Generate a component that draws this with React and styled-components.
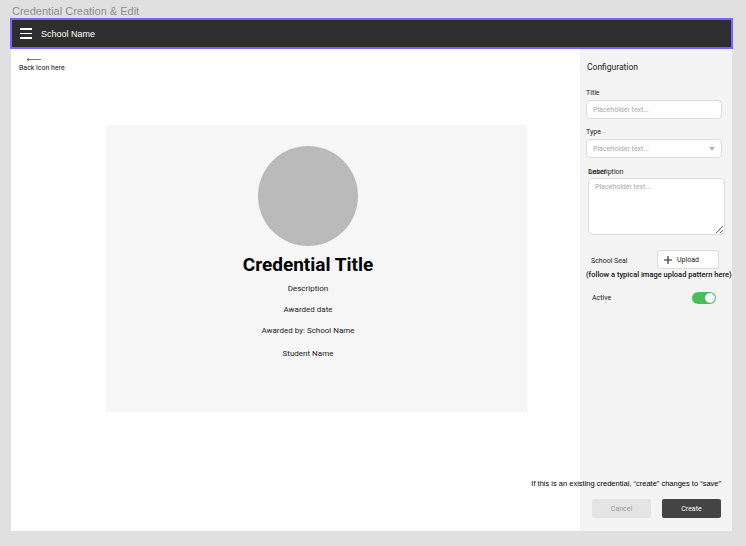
import styled, { createGlobalStyle } from "styled-components";

const Global = createGlobalStyle`
  html, body { margin: 0; padding: 0; background: #e0e0e0; }
  body { font-family: Roboto, "Liberation Sans", Arial, sans-serif; }
  * { box-sizing: border-box; }
`;

const Page = styled.div`
  width: 746px;
  height: 546px;
  padding-left: 11px;
`;

const Caption = styled.div`
  height: 18px;
  line-height: 23px;
  padding-left: 1px;
  font-family: "Liberation Sans", Arial, sans-serif;
  font-size: 11px;
  color: #8e8e8e;
`;

const Frame = styled.div`
  width: 721px;
  height: 513px;
  background: #fff;
  display: flex;
  flex-direction: column;
`;

const Header = styled.header`
  height: 31px;
  margin: 0 -1px;
  border: 2px solid #7b61ff;
  background: #2e2e2e;
  display: flex;
  align-items: center;
  padding-left: 8px;
  gap: 9px;
`;

const Burger = styled.div`
  width: 12px;
  display: flex;
  flex-direction: column;
  gap: 3px;
  span { display: block; height: 1.5px; background: #fff; }
`;

const Brand = styled.div`
  font-family: "Liberation Sans", Arial, sans-serif;
  font-size: 9px;
  font-weight: 500;
  color: #fff;
`;

const Body = styled.div`
  flex: 1;
  display: flex;
  min-height: 0;
`;

const Main = styled.main`
  flex: 1;
  padding: 8px 0 0 8px;
`;

const Back = styled.div`
  display: flex;
  flex-direction: column;
  gap: 2px;
  font-size: 7px;
  line-height: 9px;
  color: #111;
  svg { margin-left: 7px; }
`;

const Card = styled.section`
  width: 421px;
  height: 287px;
  margin: 52px 0 0 87px;
  background: #f6f6f6;
  display: flex;
  flex-direction: column;
  align-items: center;
  padding: 21px 17px 0 0;
`;

const Seal = styled.div`
  width: 100px;
  height: 100px;
  border-radius: 50%;
  background: #bababa;
`;

const CardTitle = styled.h1`
  margin: 8px 0 0;
  font-size: 19px;
  line-height: 22px;
  font-weight: 700;
  color: #000;
`;

const CardLine = styled.div`
  margin-top: ${(p) => p.$gap}px;
  font-size: 8px;
  line-height: 10px;
  color: #1a1a1a;
`;

const Panel = styled.aside`
  width: 152px;
  background: #f4f4f4;
  padding: 12px 10px 13px 6px;
  display: flex;
  flex-direction: column;
`;

const PanelTitle = styled.div`
  font-size: 8.5px;
  line-height: 12px;
  color: #222;
  padding-left: 1px;
`;

const Label = styled.div`
  position: relative;
  margin-top: ${(p) => p.$gap}px;
  padding-left: ${(p) => p.$indent || 0}px;
  font-size: 7px;
  line-height: 12px;
  color: #222;
`;

const Ghost = styled.span`
  position: absolute;
  left: 3px;
  top: 0;
  color: #333;
`;

const Field = styled.div`
  margin-top: 1px;
  height: 19px;
  background: #fff;
  border: 1px solid #dcdcdc;
  border-radius: 4px;
  display: flex;
  align-items: center;
  justify-content: space-between;
  padding: 0 6px;
  font-size: 7px;
  color: #a8a8a8;
`;

const Area = styled.textarea`
  display: block;
  margin: 0 0 0 2px;
  width: 137px;
  height: 57px;
  border: 1px solid #dcdcdc;
  border-radius: 4px;
  background: #fff;
  padding: 4px 6px;
  font-family: Roboto, sans-serif;
  font-size: 7px;
  outline: none;
  &::placeholder { color: #a8a8a8; }
`;

const SealRow = styled.div`
  margin-top: 15px;
  display: flex;
  align-items: flex-start;
  justify-content: space-between;
  padding-left: 5px;
  padding-right: 3px;
`;

const SmallText = styled.div`
  font-size: 7px;
  line-height: 10px;
  color: #222;
  padding-top: ${(p) => p.$top || 0}px;
`;

const UploadButton = styled.button`
  width: 62px;
  height: 19px;
  background: #fff;
  border: 1px solid #dcdcdc;
  border-radius: 2px;
  display: flex;
  align-items: center;
  gap: 5px;
  padding: 0 6px;
  font-family: Roboto, sans-serif;
  font-size: 7px;
  color: #222;
`;

const Hint = styled.div`
  margin-top: 1px;
  white-space: nowrap;
  font-size: 7.5px;
  font-weight: 500;
  line-height: 10px;
  color: #111;
`;

const ToggleRow = styled.div`
  margin-top: 12px;
  display: flex;
  align-items: center;
  justify-content: space-between;
  padding: 0 6px 0 6px;
`;

const Toggle = styled.div`
  width: 24px;
  height: 12px;
  border-radius: 6px;
  background: ${(p) => (p.$on ? "#4cbb5b" : "#ccc")};
  position: relative;
  &::after {
    content: "";
    position: absolute;
    top: 1px;
    left: ${(p) => (p.$on ? "13px" : "1px")};
    width: 10px;
    height: 10px;
    border-radius: 50%;
    background: #fff;
  }
`;

const Footer = styled.div`
  margin-top: auto;
  display: flex;
  flex-direction: column;
  align-items: flex-end;
  padding-right: 1px;
`;

const Note = styled.div`
  white-space: nowrap;
  font-family: "Liberation Sans", Arial, sans-serif;
  font-size: 7.5px;
  line-height: 10px;
  color: #000;
`;

const Buttons = styled.div`
  margin-top: 10px;
  display: flex;
  gap: 11px;
`;

const Button = styled.button`
  width: 59px;
  height: 19px;
  border: none;
  border-radius: 2px;
  font-family: Roboto, sans-serif;
  font-size: 7px;
  background: ${(p) => (p.$primary ? "#444" : "#e4e4e4")};
  color: ${(p) => (p.$primary ? "#fff" : "#9a9a9a")};
`;

export default function App() {
  return (
    <Page>
      <Global />
      <Caption>Credential Creation &amp; Edit</Caption>
      <Frame>
        <Header>
          <Burger>
            <span />
            <span />
            <span />
          </Burger>
          <Brand>School Name</Brand>
        </Header>
        <Body>
          <Main>
            <Back>
              <svg width="15" height="5" viewBox="0 0 15 5">
                <path d="M1 2.5H15M1 2.5L3 1M1 2.5L3 4" stroke="#777" strokeWidth="1" fill="none" />
              </svg>
              <span>Back icon here</span>
            </Back>
            <Card>
              <Seal />
              <CardTitle>Credential Title</CardTitle>
              <CardLine $gap={8}>Description</CardLine>
              <CardLine $gap={11}>Awarded date</CardLine>
              <CardLine $gap={11}>Awarded by: School Name</CardLine>
              <CardLine $gap={13}>Student Name</CardLine>
            </Card>
          </Main>
          <Panel>
            <PanelTitle>Configuration</PanelTitle>
            <Label $gap={14}>Title</Label>
            <Field>Placeholder text...</Field>
            <Label $gap={7}>Type</Label>
            <Field>
              <span>Placeholder text...</span>
              <svg width="6" height="4" viewBox="0 0 6 4">
                <path d="M0 0H6L3 4Z" fill="#b5b5b5" />
              </svg>
            </Field>
            <Label $gap={8} $indent={2}>
              Description
              <Ghost>Label</Ghost>
            </Label>
            <Area placeholder="Placeholder text..." readOnly />
            <SealRow>
              <SmallText $top={6}>School Seal</SmallText>
              <UploadButton>
                <svg width="8" height="8" viewBox="0 0 8 8">
                  <path d="M4 0V8M0 4H8" stroke="#222" strokeWidth="1.1" />
                </svg>
                Upload
              </UploadButton>
            </SealRow>
            <Hint>(follow a typical image upload pattern here)</Hint>
            <ToggleRow>
              <SmallText>Active</SmallText>
              <Toggle $on />
            </ToggleRow>
            <Footer>
              <Note>If this is an existing credential, “create” changes to “save”</Note>
              <Buttons>
                <Button>Cancel</Button>
                <Button $primary>Create</Button>
              </Buttons>
            </Footer>
          </Panel>
        </Body>
      </Frame>
    </Page>
  );
}
